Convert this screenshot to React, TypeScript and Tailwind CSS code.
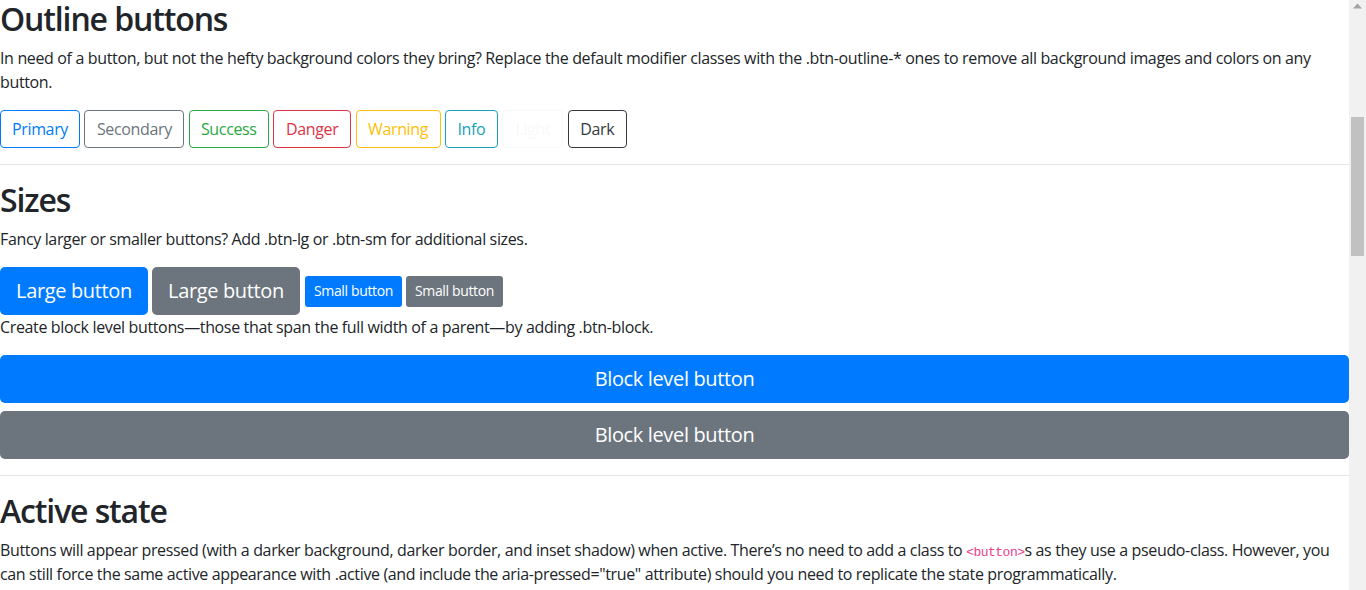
import React from 'react';

const outline = [
  { label: 'Primary', w: 'w-[80px]', cls: 'border-[#007bff] text-[#007bff]' },
  { label: 'Secondary', w: 'w-[100px]', cls: 'border-[#6c757d] text-[#6c757d]' },
  { label: 'Success', w: 'w-[80px]', cls: 'border-[#28a745] text-[#28a745]' },
  { label: 'Danger', w: 'w-[78px]', cls: 'border-[#dc3545] text-[#dc3545]' },
  { label: 'Warning', w: 'w-[85px]', cls: 'border-[#ffc107] text-[#ffc107]' },
  { label: 'Info', w: 'w-[53px]', cls: 'border-[#17a2b8] text-[#17a2b8]' },
  { label: 'Light', w: 'w-[61px]', cls: 'border-[#f8f9fa] text-[#f8f9fa]' },
  { label: 'Dark', w: 'w-[59px]', cls: 'border-[#343a40] text-[#343a40]' },
];

const Heading = ({ children }: { children: React.ReactNode }) => (
  <h2 className="text-[32px] leading-[38px] font-semibold tracking-[-0.035em] mb-2 text-[#212529]">{children}</h2>
);

const Rule = () => <hr className="my-4 border-0 border-t border-black/10" />;

export default function App() {
  return (
    <div className="flex h-[590px] overflow-hidden bg-white text-[#212529] font-['Open_Sans',sans-serif]">
      <main className="w-[1349px] shrink-0 text-base leading-6 tracking-[-0.022em]">
        <Heading>Outline buttons</Heading>
        <p className="mb-4">
          In need of a button, but not the hefty background colors they bring? Replace the default modifier classes
          with the .btn-outline-* ones to remove all background images and colors on any button.
        </p>
        <div className="flex gap-[4.4px]">
          {outline.map((b) => (
            <button
              key={b.label}
              className={`h-[38px] ${b.w} rounded border bg-white text-base ${b.cls}`}
            >
              {b.label}
            </button>
          ))}
        </div>
        <Rule />

        <Heading>Sizes</Heading>
        <p className="mb-4">Fancy larger or smaller buttons? Add .btn-lg or .btn-sm for additional sizes.</p>
        <div className="flex items-center">
          <button className="h-12 w-[148px] rounded-[5px] bg-[#007bff] text-[20px] text-white">Large button</button>
          <button className="ml-1 h-12 w-[148px] rounded-[5px] bg-[#6c757d] text-[20px] text-white">Large button</button>
          <button className="ml-[5px] h-[31px] w-[97px] rounded-[3px] bg-[#007bff] text-sm text-white">Small button</button>
          <button className="ml-1 h-[31px] w-[97px] rounded-[3px] bg-[#6c757d] text-sm text-white">Small button</button>
        </div>
        <p className="mb-4">
          Create block level buttons—those that span the full width of a parent—by adding .btn-block.
        </p>
        <button className="block h-12 w-full rounded-[5px] bg-[#007bff] text-[20px] text-white">Block level button</button>
        <button className="mt-2 block h-12 w-full rounded-[5px] bg-[#6c757d] text-[20px] text-white">Block level button</button>
        <Rule />

        <Heading>Active state</Heading>
        <p>
          Buttons will appear pressed (with a darker background, darker border, and inset shadow) when active.
          There’s no need to add a class to{' '}
          <code className="font-['Liberation_Mono',monospace] text-[13px] leading-none tracking-[-0.04em] text-[#e83e8c]">&lt;button&gt;</code>s as they
          use a pseudo-class. However, you can still force the same active appearance with .active (and include the
          aria-pressed="true" attribute) should you need to replicate the state programmatically.
        </p>
      </main>
      <div className="flex w-[17px] flex-col items-center bg-[#f1f1f1]">
        <svg width="9" height="6" viewBox="0 0 9 6" className="mt-[3px]">
          <path d="M0 5.5 L4.5 0.5 L9 5.5 Z" fill="#a3a3a3" />
        </svg>
        <div className="mt-[108px] h-[139px] w-[13px] bg-[#c1c1c1]" />
      </div>
    </div>
  );
}
